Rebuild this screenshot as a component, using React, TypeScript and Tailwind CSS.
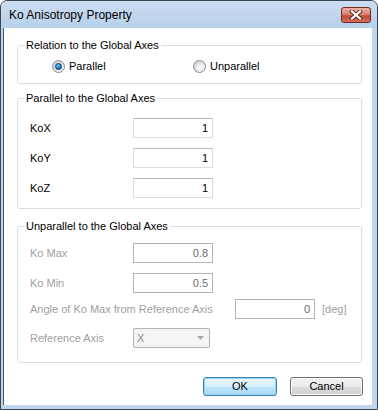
import React from "react";

function Radio({ checked, label }: { checked: boolean; label: string }) {
  return (
    <div className="flex items-center gap-[4px]">
      <span className="w-[13px] h-[13px] rounded-full border border-[#8a8c8f] bg-[linear-gradient(135deg,#c9cdd2,#f6f7f8)] flex items-center justify-center">
        {checked ? (
          <span className="w-[7px] h-[7px] rounded-full bg-[radial-gradient(circle_at_35%_30%,#7fd0ff,#1a78c8_55%,#0b4f91)] border border-[#0d3f6e]" />
        ) : (
          <span className="w-[7px] h-[7px] rounded-full bg-[linear-gradient(135deg,#dfe3e7,#ffffff)]" />
        )}
      </span>
      <span className="text-[11px] leading-[13px] text-black">{label}</span>
    </div>
  );
}

function Field({ value, disabled }: { value: string; disabled?: boolean }) {
  return (
    <div
      className={
        disabled
          ? "w-[80px] h-[20px] border border-[#b3b3b3] bg-white flex items-center justify-end pr-[4px] text-[11px] text-[#6d6d6d]"
          : "w-[80px] h-[20px] border border-[#dadde2] border-t-[#b4b7bc] bg-white flex items-center justify-end pr-[4px] text-[11px] text-black"
      }
    >
      {value}
    </div>
  );
}

function Group({
  title,
  className,
  children,
}: {
  title: string;
  className: string;
  children: React.ReactNode;
}) {
  return (
    <fieldset className={"border border-[#d5dfe5] rounded-[3px] px-[6px] " + className}>
      <legend className="px-[2px] text-[11px] leading-[13px] text-black">{title}</legend>
      <div className="pl-[6px]">{children}</div>
    </fieldset>
  );
}

export default function App() {
  return (
    <div className="w-[378px] h-[411px] bg-white font-['Liberation_Sans',Arial,sans-serif]">
      <div className="w-[378px] h-[410px] flex flex-col border border-[#3a4652] rounded-t-[7px] bg-[#bed5ed] overflow-hidden">
        {/* Title bar */}
        <div className="h-[27px] shrink-0 flex items-center justify-between pl-[8px] pr-[6px] bg-[linear-gradient(#cadcf0,#b8d0ea)]">
          <span className="text-[12px] text-black leading-[14px]">Ko Anisotropy Property</span>
          <div className="w-[30px] h-[16px] rounded-[3px] border border-[#6e2a22] bg-[linear-gradient(#eab2a4,#d77a68_50%,#c34a36_55%,#d46f5b)] flex items-center justify-center">
            <svg width="14" height="10" viewBox="0 0 14 10">
              <path d="M3 1.5 L11 8.5 M11 1.5 L3 8.5" stroke="#5a2a24" strokeWidth="4" strokeLinecap="square" />
              <path d="M3 1.5 L11 8.5 M11 1.5 L3 8.5" stroke="#ffffff" strokeWidth="2.2" strokeLinecap="square" />
            </svg>
          </div>
        </div>

        {/* Client area */}
        <div className="flex-1 ml-[2px] mr-[5px] mb-[4px] bg-white border-l border-[#4a5560] pl-[13px] pr-[10px] pt-[11px] flex flex-col">
          <Group title="Relation to the Global Axes" className="h-[45px]">
            <div className="flex mt-[8px] pl-[22px]">
              <div className="w-[141px]">
                <Radio checked label="Parallel" />
              </div>
              <Radio checked={false} label="Unparallel" />
            </div>
          </Group>

          <Group title="Parallel to the Global Axes" className="h-[117px] mt-[8px]">
            <div className="flex flex-col gap-[10px] mt-[13px]">
              <div className="flex items-center">
                <span className="w-[103px] text-[11px] text-black">KoX</span>
                <Field value="1" />
              </div>
              <div className="flex items-center">
                <span className="w-[103px] text-[11px] text-black">KoY</span>
                <Field value="1" />
              </div>
              <div className="flex items-center">
                <span className="w-[103px] text-[11px] text-black">KoZ</span>
                <Field value="1" />
              </div>
            </div>
          </Group>

          <Group title="Unparallel to the Global Axes" className="h-[143px] mt-[11px]">
            <div className="flex flex-col mt-[10px]">
              <div className="flex items-center">
                <span className="w-[103px] text-[11px] text-[#a0a0a0]">Ko Max</span>
                <Field value="0.8" disabled />
              </div>
              <div className="flex items-center mt-[10px]">
                <span className="w-[103px] text-[11px] text-[#a0a0a0]">Ko Min</span>
                <Field value="0.5" disabled />
              </div>
              <div className="flex items-center mt-[6px]">
                <span className="w-[205px] text-[11px] text-[#a0a0a0]">Angle of Ko Max from Reference Axis</span>
                <Field value="0" disabled />
                <span className="ml-[7px] text-[11px] text-[#a0a0a0]">[deg]</span>
              </div>
              <div className="flex items-center mt-[9px]">
                <span className="w-[103px] text-[11px] text-[#a0a0a0]">Reference Axis</span>
                <div className="w-[77px] h-[20px] rounded-[2px] border border-[#b3b3b3] bg-[#f4f4f4] flex items-center justify-between pl-[3px] pr-[5px]">
                  <span className="text-[11px] text-[#8a8a8a]">X</span>
                  <svg width="7" height="4" viewBox="0 0 7 4">
                    <path d="M0 0 H7 L3.5 4 Z" fill="#a8a8a8" />
                  </svg>
                </div>
              </div>
            </div>
          </Group>

          <div className="flex justify-end gap-[13px] mt-[14px] -mr-[1px]">
            <button className="w-[74px] h-[19px] rounded-[3px] border border-[#3c7fb1] bg-[linear-gradient(#eaf6fd,#d9f0fc_50%,#bee6fd_50%,#a7d9f5)] shadow-[inset_0_0_0_1px_#9ad4f2] text-[11px] text-black flex items-center justify-center">
              OK
            </button>
            <button className="w-[73px] h-[19px] rounded-[3px] border border-[#707070] bg-[linear-gradient(#f2f2f2,#ebebeb_50%,#dddddd_50%,#cfcfcf)] shadow-[inset_0_0_0_1px_#fcfcfc] text-[11px] text-black flex items-center justify-center">
              Cancel
            </button>
          </div>
        </div>
      </div>
    </div>
  );
}
